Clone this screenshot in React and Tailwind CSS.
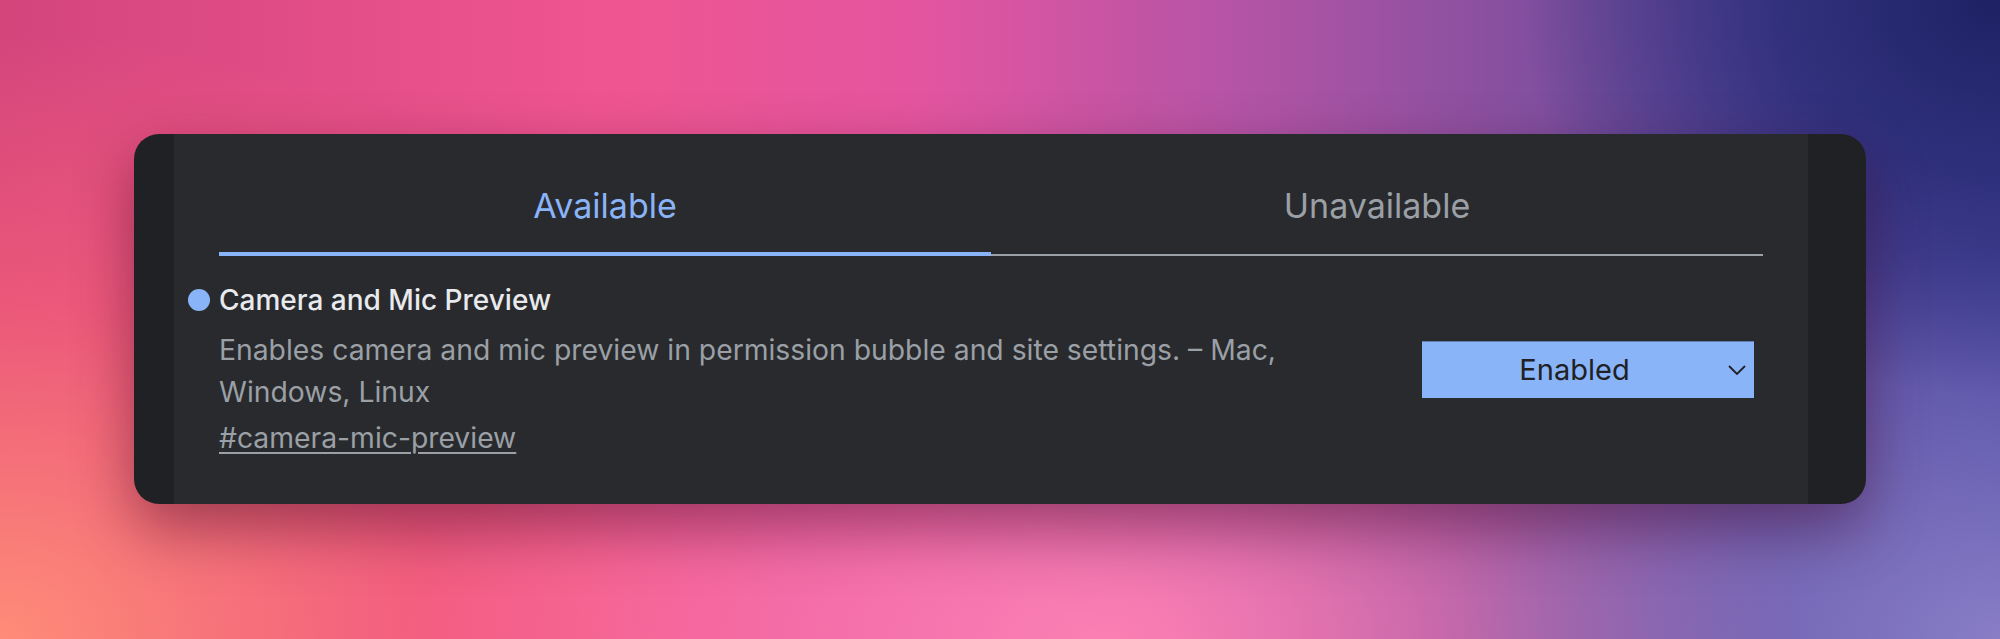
import React, { useState } from "react";

const tabs = ["Available", "Unavailable"];

function Chevron() {
  return (
    <svg
      width="18"
      height="11"
      viewBox="0 0 18 11"
      fill="none"
      className="absolute right-[8px] top-1/2 -translate-y-1/2"
    >
      <path d="M1 1.5 L9 9.5 L17 1.5" stroke="#202124" strokeWidth="1.8" />
    </svg>
  );
}

export default function App() {
  const [active, setActive] = useState(0);

  return (
    <div
      className="w-full h-[639px] flex items-start justify-center pt-[134px] bg-[image:radial-gradient(ellipse_24%_62%_at_100%_0%,#1e2264_0%,rgba(42,44,118,0.85)_45%,rgba(60,60,150,0)_100%),radial-gradient(ellipse_28%_60%_at_100%_100%,rgba(140,128,200,0.95)_0%,rgba(140,128,200,0)_100%),radial-gradient(ellipse_35%_55%_at_55%_100%,rgba(255,130,180,0.95)_0%,rgba(255,130,180,0)_100%),radial-gradient(ellipse_40%_95%_at_0%_100%,rgba(255,140,120,1)_0%,rgba(250,100,120,0.6)_55%,rgba(255,120,120,0)_100%),linear-gradient(90deg,#d4457c_0%,#ef5590_30%,#e455a0_46%,#b454a6_62%,#7e4f9e_78%,#5a4aa0_90%,#4c48a0_100%)]"
      style={{ fontFamily: "Inter, 'Noto Sans', sans-serif" }}
    >
      <div className="w-[1732px] h-[370px] rounded-[25px] overflow-hidden bg-[#202124] pl-[40px] pr-[58px] shadow-[0_24px_60px_rgba(60,0,30,0.45)]">
        <div className="h-full bg-[#292a2d] px-[45px] pt-[52px]">
          {/* Tabs */}
          <div className="flex">
            {tabs.map((t, i) => (
              <button
                key={t}
                onClick={() => setActive(i)}
                className={`flex-1 text-center text-[34px] leading-[40px] ${
                  active === i
                    ? "text-[#8ab4f8] pb-[26px] border-b-4 border-[#8ab4f8]"
                    : "text-[#9aa0a6] pb-[28px] border-b-2 border-[#9aa0a6]"
                }`}
              >
                {t}
              </button>
            ))}
          </div>

          {/* Experiment row */}
          <div className="flex items-center justify-between mt-[23px]">
            <div className="w-[1090px]">
              <div className="flex items-center gap-[9px] -ml-[31px] text-[28px] leading-[42px] font-medium text-[#e8eaed]">
                <span className="w-[22px] h-[22px] rounded-full bg-[#8ab4f8]" />
                <span>Camera and Mic Preview</span>
              </div>
              <p className="mt-[8px] text-[28.3px] leading-[42px] text-[#9aa0a6]">
                Enables camera and mic preview in permission bubble and site
                settings. – Mac, Windows, Linux
              </p>
              <a
                href="#camera-mic-preview"
                className="block mt-[4px] text-[28.3px] leading-[42px] text-[#9aa0a6] underline underline-offset-[4px] decoration-[2px]"
              >
                #camera-mic-preview
              </a>
            </div>
            <div className="relative mr-[9px] w-[332px] h-[57px] bg-[#8ab4f8] border-t border-[#5f7fb0] flex items-center justify-center pr-[27px] text-[29px] text-[#202124]">
              Enabled
              <Chevron />
            </div>
          </div>
        </div>
      </div>
    </div>
  );
}
